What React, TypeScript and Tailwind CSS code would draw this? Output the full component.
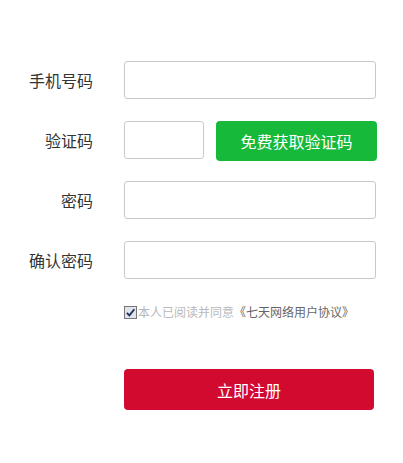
import { useState } from "react";

const fields = [
  { label: "手机号码", type: "tel" },
  { label: "验证码", type: "code" },
  { label: "密码", type: "password" },
  { label: "确认密码", type: "password" },
];

export default function App() {
  const [agreed, setAgreed] = useState(true);

  return (
    <div
      className="min-h-screen bg-white pt-[61px]"
      style={{ fontFamily: '"Microsoft YaHei", "Noto Sans CJK SC", sans-serif' }}
    >
      <div className="flex flex-col gap-[22px]">
        {fields.map((f) => (
          <div key={f.label} className="flex h-[38px] items-start">
            <label className="flex h-[38px] w-[93px] shrink-0 items-center justify-end text-[16px] text-[#333]">
              {f.label}
            </label>
            {f.type === "code" ? (
              <div className="ml-[31px] flex gap-3">
                <input className="h-[38px] w-[80px] rounded-[3px] border border-[#c8c8c8] outline-none" />
                <button className="h-[40px] w-[161px] rounded-[4px] bg-[#17b93a] text-[16px] text-white">
                  免费获取验证码
                </button>
              </div>
            ) : (
              <input
                type={f.type === "password" ? "password" : "text"}
                className="ml-[31px] h-[38px] w-[252px] rounded-[3px] border border-[#c8c8c8] outline-none"
              />
            )}
          </div>
        ))}
      </div>

      <label className="ml-[124px] mt-[26px] flex h-[14px] items-center text-[12px]">
        <span
          onClick={() => setAgreed(!agreed)}
          className="flex h-[13px] w-[13px] items-center justify-center border border-[#777] bg-[#dfe3ea]"
        >
          {agreed && (
            <svg viewBox="0 0 12 12" className="h-[11px] w-[11px]">
              <path d="M2 6.5 L4.8 9.2 L10.2 2.5" fill="none" stroke="#1f2f5a" strokeWidth="2" />
            </svg>
          )}
        </span>
        <span className="ml-px text-[#b9b9b9]">本人已阅读并同意</span>
        <span className="text-[#666]">《七天网络用户协议》</span>
      </label>

      <button className="ml-[124px] mt-[50px] h-[41px] w-[250px] rounded-[4px] bg-[#d20a30] text-[16px] text-white">
        立即注册
      </button>
    </div>
  );
}
